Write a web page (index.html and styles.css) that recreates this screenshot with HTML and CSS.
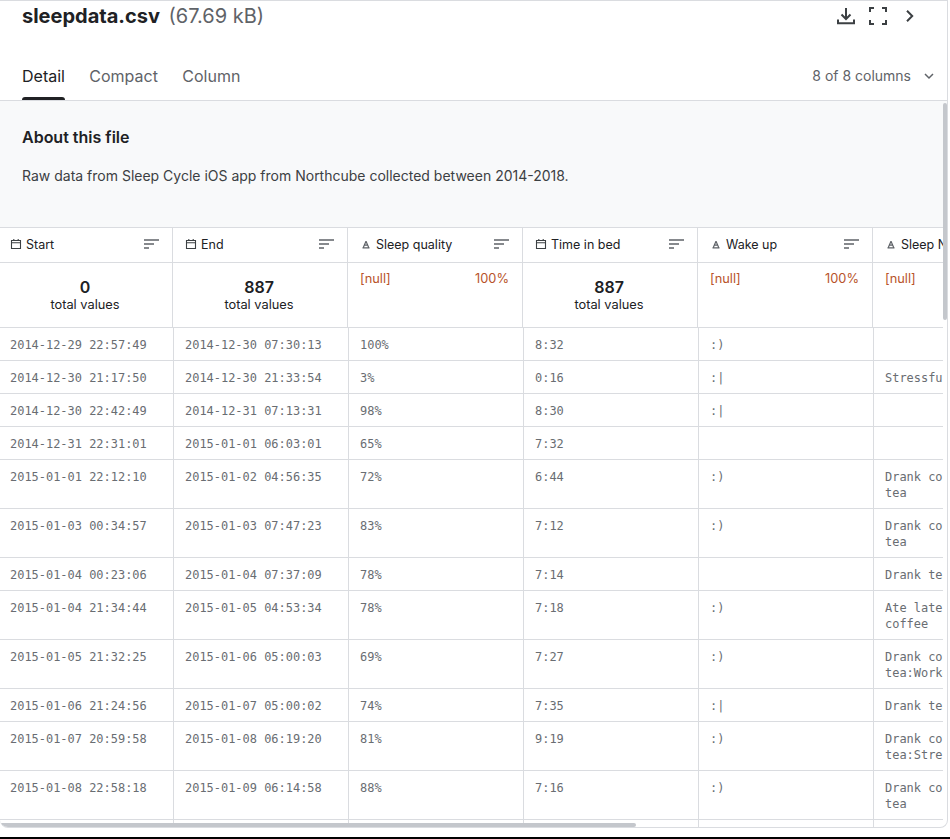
FILE: index.html
```html
<!DOCTYPE html>
<html>
<head>
    <meta http-equiv="Content-Type" content="text/html; charset=UTF-8">
    <title>sleepdata.csv</title>
    <link rel="stylesheet" href="styles.css">
</head>

<body>
<div class="card">
    <div class="title-row">
        <div class="title"><b>sleepdata.csv</b> <span>(67.69 kB)</span></div>
        <div class="actions">
            <svg width="24" height="24" viewBox="0 0 24 24"><path d="M12 4v11M7.500 10.500l4.500 4.500 4.500-4.500M4 15.500v3.700h16v-3.700" fill="none" stroke="#3c4043" stroke-width="2"/></svg>
            <svg width="24" height="24" viewBox="0 0 24 24"><path d="M4 8V4h4M16 4h4v4M20 16v4h-4M8 20H4v-4" fill="none" stroke="#3c4043" stroke-width="2"/></svg>
            <svg width="24" height="24" viewBox="0 0 24 24"><path d="M9 6.800l5.200 5.200L9 17.200" fill="none" stroke="#3c4043" stroke-width="2"/></svg>
        </div>
    </div>
    <div class="tabs">
        <div class="tab active">Detail</div>
        <div class="tab">Compact</div>
        <div class="tab">Column</div>
        <div class="columns">8 of 8 columns
            <svg width="16" height="16" viewBox="0 0 16 16"><path d="M4 6l4 4 4-4" fill="none" stroke="#5f6368" stroke-width="1.500"/></svg>
        </div>
    </div>
    <div class="about">
        <h3>About this file</h3>
        <p>Raw data from Sleep Cycle iOS app from Northcube collected between 2014-2018.</p>
    </div>
    <div class="grid">
        <table class="head">
            <colgroup><col class="first"><col class="col"><col class="col"><col class="col"><col class="col"><col class="col"></colgroup>
            <tr class="names">
                <th><div class="name"><svg class="ic" viewBox="0 0 12 12"><path d="M1.500 2.500h9v8h-9zM1.500 4.800h9M3.800 1v1.500M8.200 1v1.500" fill="none" stroke="#3c4043" stroke-width="1.100"/></svg>Start<svg class="sort" viewBox="0 0 15 10"><path d="M0 1h15M0 5h10M0 9h5" fill="none" stroke="#5f6368" stroke-width="1.500"/></svg></div></th>
                <th><div class="name"><svg class="ic" viewBox="0 0 12 12"><path d="M1.500 2.500h9v8h-9zM1.500 4.800h9M3.800 1v1.500M8.200 1v1.500" fill="none" stroke="#3c4043" stroke-width="1.100"/></svg>End<svg class="sort" viewBox="0 0 15 10"><path d="M0 1h15M0 5h10M0 9h5" fill="none" stroke="#5f6368" stroke-width="1.500"/></svg></div></th>
                <th><div class="name"><svg class="ic" viewBox="0 0 12 12"><path d="M6 3.200L3.300 9.500M6 3.200l2.700 6.300M2.500 9.800h7M4.300 7.200h3.400" fill="none" stroke="#5f6368" stroke-width="1.200"/></svg>Sleep quality<svg class="sort" viewBox="0 0 15 10"><path d="M0 1h15M0 5h10M0 9h5" fill="none" stroke="#5f6368" stroke-width="1.500"/></svg></div></th>
                <th><div class="name"><svg class="ic" viewBox="0 0 12 12"><path d="M1.500 2.500h9v8h-9zM1.500 4.800h9M3.800 1v1.500M8.200 1v1.500" fill="none" stroke="#3c4043" stroke-width="1.100"/></svg>Time in bed<svg class="sort" viewBox="0 0 15 10"><path d="M0 1h15M0 5h10M0 9h5" fill="none" stroke="#5f6368" stroke-width="1.500"/></svg></div></th>
                <th><div class="name"><svg class="ic" viewBox="0 0 12 12"><path d="M6 3.200L3.300 9.500M6 3.200l2.700 6.300M2.500 9.800h7M4.300 7.200h3.400" fill="none" stroke="#5f6368" stroke-width="1.200"/></svg>Wake up<svg class="sort" viewBox="0 0 15 10"><path d="M0 1h15M0 5h10M0 9h5" fill="none" stroke="#5f6368" stroke-width="1.500"/></svg></div></th>
                <th><div class="name"><svg class="ic" viewBox="0 0 12 12"><path d="M6 3.200L3.300 9.500M6 3.200l2.700 6.300M2.500 9.800h7M4.300 7.200h3.400" fill="none" stroke="#5f6368" stroke-width="1.200"/></svg>Sleep Notes</div></th>
            </tr>
            <tr class="stats">
                <td class="total"><b>0</b>total values</td>
                <td class="total"><b>887</b>total values</td>
                <td class="nulls"><div><span>[null]</span><span>100%</span></div></td>
                <td class="total"><b>887</b>total values</td>
                <td class="nulls"><div><span>[null]</span><span>100%</span></div></td>
                <td class="nulls"><div><span>[null]</span></div></td>
            </tr>
        </table>
        <table class="rows">
            <colgroup><col class="first2"><col class="col"><col class="col"><col class="col"><col class="col"><col class="col"></colgroup>
            <tr><td>2014-12-29 22:57:49</td><td>2014-12-30 07:30:13</td><td>100%</td><td>8:32</td><td>:)</td><td></td></tr>
            <tr><td>2014-12-30 21:17:50</td><td>2014-12-30 21:33:54</td><td>3%</td><td>0:16</td><td>:|</td><td>Stressful day</td></tr>
            <tr><td>2014-12-30 22:42:49</td><td>2014-12-31 07:13:31</td><td>98%</td><td>8:30</td><td>:|</td><td></td></tr>
            <tr><td>2014-12-31 22:31:01</td><td>2015-01-01 06:03:01</td><td>65%</td><td>7:32</td><td></td><td></td></tr>
            <tr><td>2015-01-01 22:12:10</td><td>2015-01-02 04:56:35</td><td>72%</td><td>6:44</td><td>:)</td><td>Drank coffee:Drank tea</td></tr>
            <tr><td>2015-01-03 00:34:57</td><td>2015-01-03 07:47:23</td><td>83%</td><td>7:12</td><td>:)</td><td>Drank coffee:Drank tea</td></tr>
            <tr><td>2015-01-04 00:23:06</td><td>2015-01-04 07:37:09</td><td>78%</td><td>7:14</td><td></td><td>Drank tea</td></tr>
            <tr><td>2015-01-04 21:34:44</td><td>2015-01-05 04:53:34</td><td>78%</td><td>7:18</td><td>:)</td><td>Ate late:Drank coffee</td></tr>
            <tr><td>2015-01-05 21:32:25</td><td>2015-01-06 05:00:03</td><td>69%</td><td>7:27</td><td>:)</td><td>Drank coffee:Drank tea:Worked out</td></tr>
            <tr><td>2015-01-06 21:24:56</td><td>2015-01-07 05:00:02</td><td>74%</td><td>7:35</td><td>:|</td><td>Drank tea</td></tr>
            <tr><td>2015-01-07 20:59:58</td><td>2015-01-08 06:19:20</td><td>81%</td><td>9:19</td><td>:)</td><td>Drank coffee:Drank tea:Stressful day</td></tr>
            <tr><td>2015-01-08 22:58:18</td><td>2015-01-09 06:14:58</td><td>88%</td><td>7:16</td><td>:)</td><td>Drank coffee:Drank tea</td></tr>
            <tr><td></td><td></td><td></td><td></td><td></td><td></td></tr>
        </table>
    </div>
    <div class="bar-v"></div>
    <div class="bar-h"></div>
</div>
<div class="bottom"></div>
</body>
</html>
```

FILE: styles.css
```css
html, body {
  margin: 0;
  height: 839px;
  overflow: hidden;
  background: #fff;
}
body {
  font-family: Inter, "Liberation Sans", sans-serif;
  color: #202124;
}
.card {
  position: relative;
  width: 948px;
  height: 828px;
  box-sizing: border-box;
  border-top: 1px solid #dadce0;
  border-right: 1px solid #dadce0;
  border-bottom: 1px solid #dadce0;
  border-bottom-left-radius: 8px;
  border-bottom-right-radius: 8px;
  overflow: hidden;
}
.bottom {
  height: 2px;
  margin-top: 9px;
  background: #000;
}
.title-row {
  height: 43px;
  padding: 0 22px;
  display: flex;
  justify-content: space-between;
}
.title {
  font-size: 20px;
  line-height: 30px;
}
.title b {
  font-weight: 700;
  margin-right: 3px;
}
.title span {
  color: #5f6368;
}
.actions {
  display: flex;
  gap: 8px;
  margin-right: 3px;
  padding-top: 3px;
}
.tabs {
  height: 56px;
  padding: 0 10px 0 22px;
  display: flex;
  gap: 24.4px;
  border-bottom: 1px solid #dadce0;
}
.tab {
  font-size: 16px;
  line-height: 20px;
  color: #5f6368;
  padding-top: 22px;
}
.tab.active {
  color: #202124;
  position: relative;
}
.tab.active::after {
  content: "";
  position: absolute;
  left: 0;
  right: 0;
  bottom: 0;
  height: 3px;
  background: #202124;
  border-radius: 3px 3px 0 0;
}
.columns {
  margin-left: auto;
  font-size: 14px;
  color: #5f6368;
  padding-top: 23px;
  line-height: 18px;
  display: flex;
  gap: 10px;
}
.columns svg {
  margin-top: 1px;
}
.about {
  height: 127px;
  box-sizing: border-box;
  padding: 26px 22px 0;
  background: #f8f9fa;
  border-bottom: 1px solid #dadce0;
}
.about h3 {
  margin: 0;
  font-size: 16px;
  line-height: 20px;
  font-weight: 600;
}
.about p {
  margin: 19px 0 0;
  font-size: 14px;
  line-height: 20px;
  color: #3c4043;
}
.grid {
  width: 943px;
  height: 600px;
  overflow: hidden;
}
table {
  table-layout: fixed;
  border-collapse: separate;
  border-spacing: 0;
  width: 1048px;
}
.first { width: 173px; }
.first2 { width: 174px; }
.col { width: 175px; }
.head th, .head td {
  padding: 0;
  box-sizing: border-box;
  border-right: 1px solid #dadce0;
  border-bottom: 1px solid #dadce0;
  font-weight: 400;
}
.names th {
  height: 35px;
}
.name {
  display: flex;
  align-items: center;
  padding: 0 13px 2px 12px;
  font-size: 12.500px;
  color: #202124;
  text-align: left;
  white-space: nowrap;
}
.head th:first-child .name {
  padding-left: 10px;
}
.ic {
  width: 12px;
  height: 12px;
  flex: none;
  margin-right: 4px;
}
.sort {
  width: 15px;
  height: 10px;
  margin-left: auto;
  flex: none;
}
.stats td {
  height: 65px;
  vertical-align: top;
}
.total {
  text-align: center;
  font-size: 12.800px;
  line-height: 16px;
  padding: 14px 2px 0 0 !important;
}
.total b {
  display: block;
  font-size: 16px;
  line-height: 20px;
  font-weight: 600;
}
.nulls {
  padding: 8px 13px 0 12px !important;
  font-size: 12.800px;
  line-height: 16px;
  color: #b8532a;
}
.nulls div {
  display: flex;
  justify-content: space-between;
}
.rows td {
  box-sizing: border-box;
  padding: 9px 12px 7px 11px;
  border-right: 1px solid #dadce0;
  border-bottom: 1px solid #dadce0;
  font-family: "DejaVu Sans Mono", "Liberation Mono", monospace;
  font-size: 11.960px;
  line-height: 16px;
  color: #696d72;
  vertical-align: top;
  height: 33px;
}
.rows td:first-child {
  padding-left: 10px;
}
.bar-v {
  position: absolute;
  top: 102px;
  right: 0;
  width: 4px;
  height: 217px;
  border-radius: 2px;
  background: #c4c7cc;
}
.bar-h {
  position: absolute;
  left: 0;
  bottom: 0;
  width: 636px;
  height: 4px;
  border-radius: 2px;
  background: #c4c7cc;
}
```
